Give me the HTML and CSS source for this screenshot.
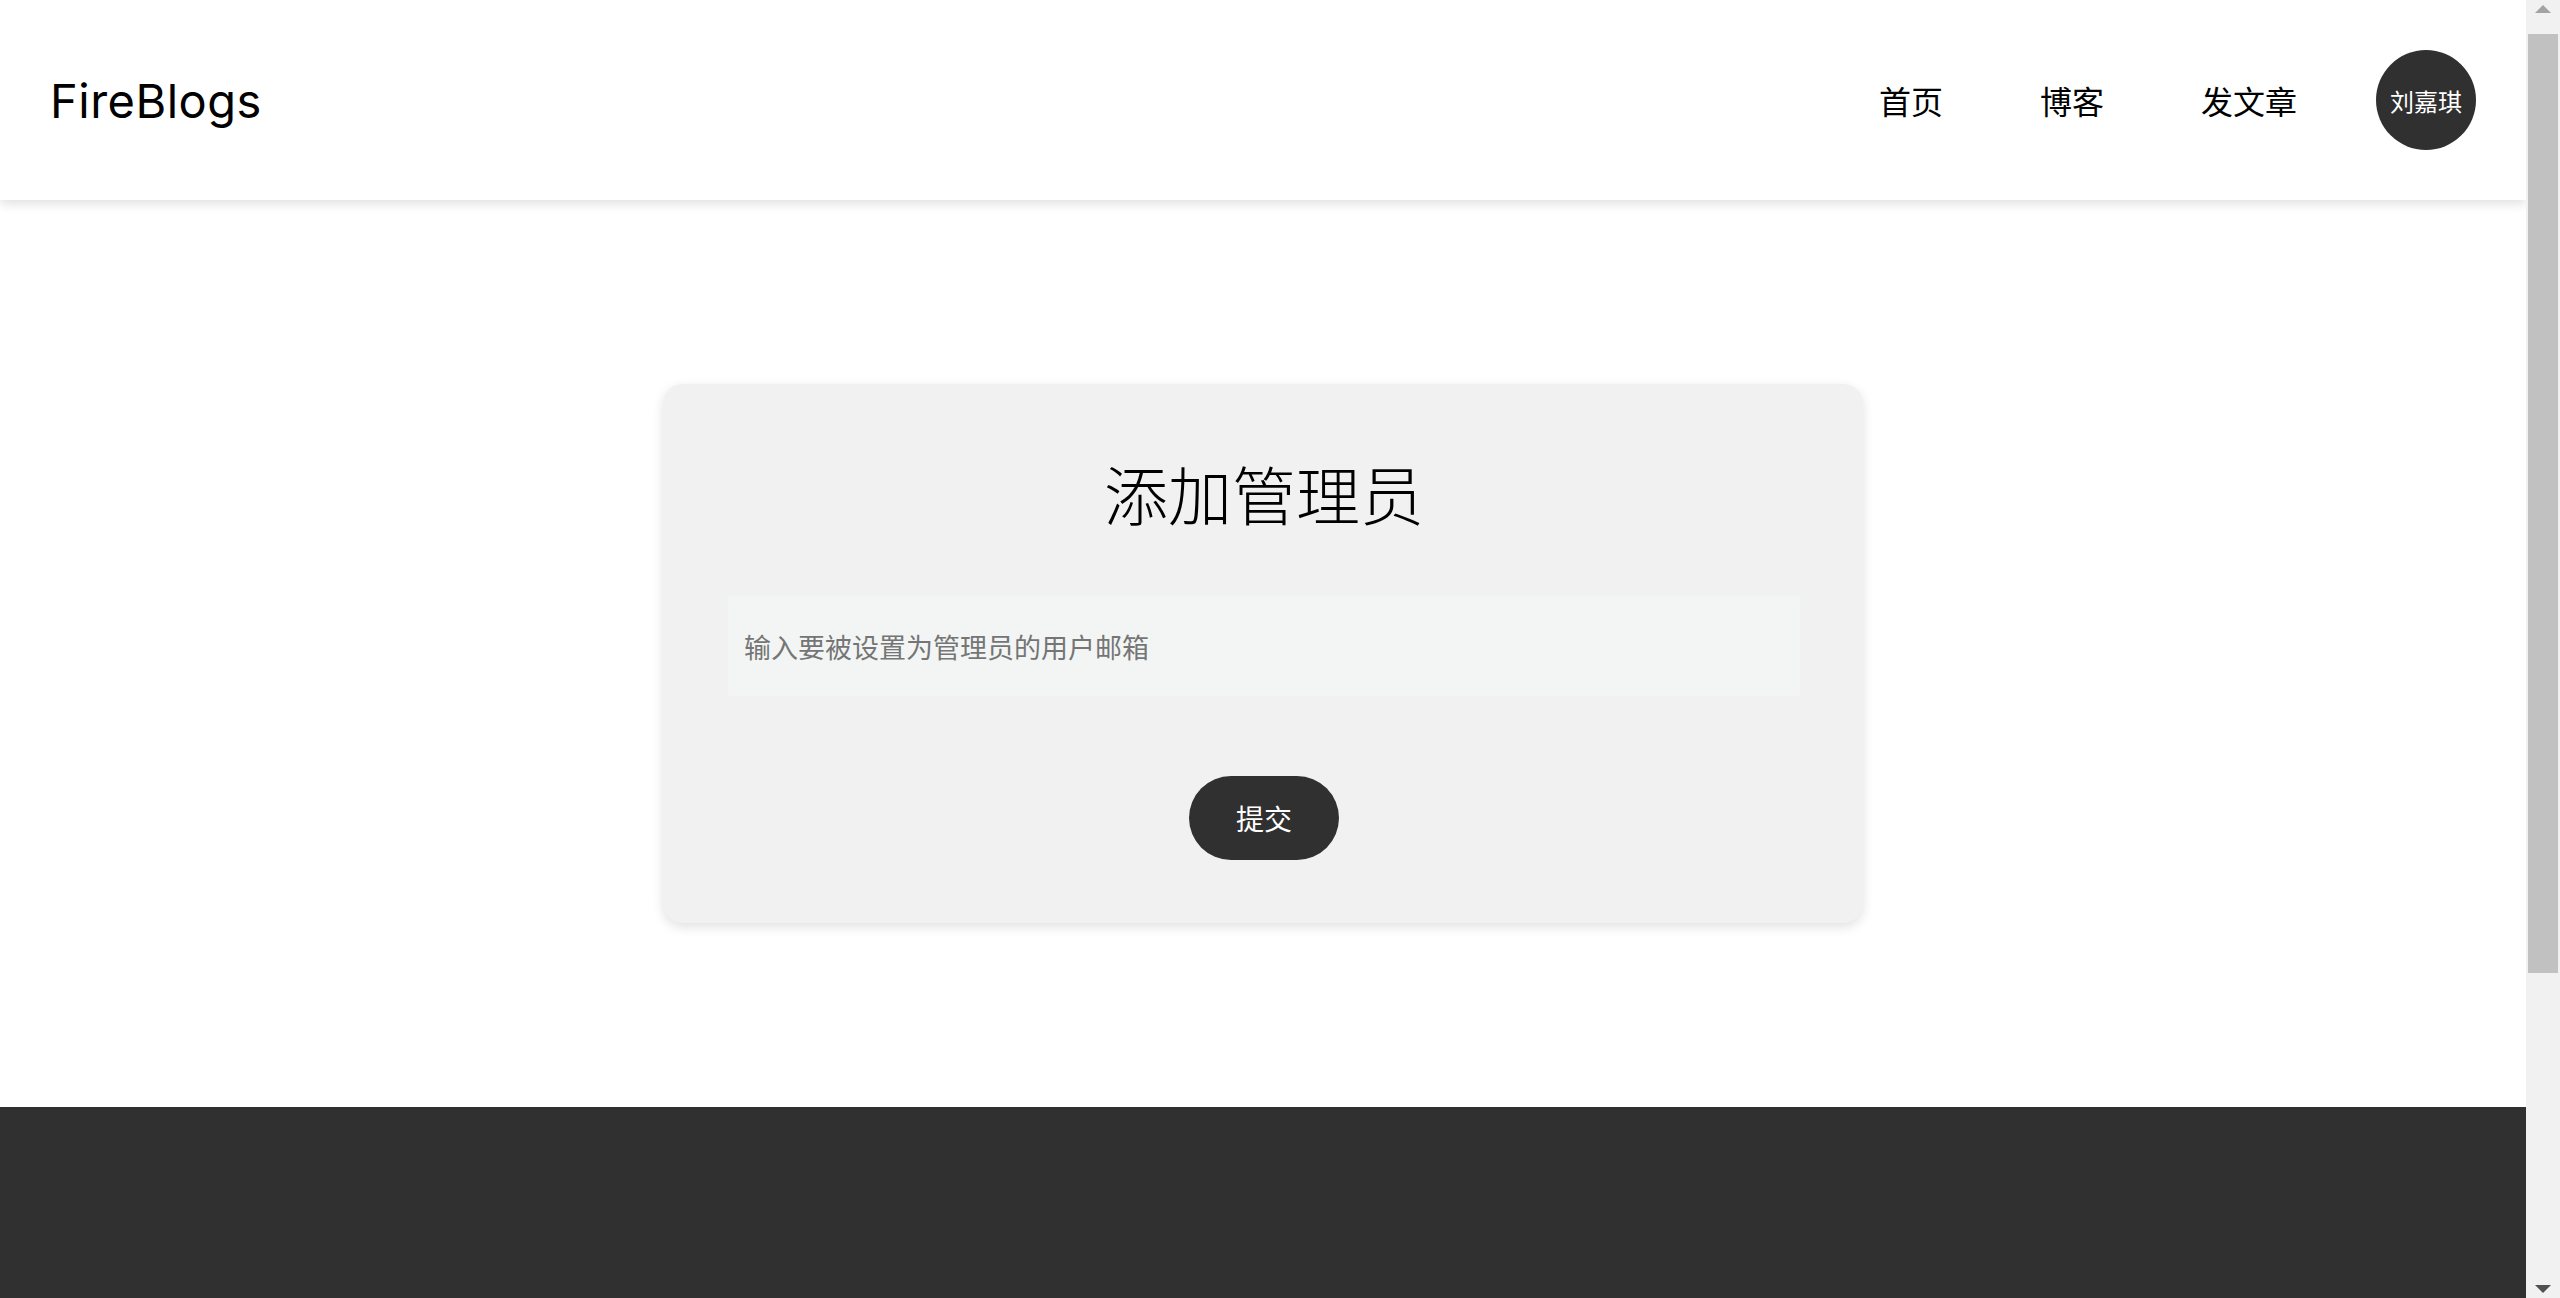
FILE: index.html
```html
<!DOCTYPE html>
<html lang="zh">
<head>
  <meta charset="UTF-8" />
  <title>FireBlogs - 添加管理员</title>
  <link rel="stylesheet" href="styles.css">
</head>
<body>
  <header class="nav-bar">
    <div class="logo">FireBlogs</div>
    <nav class="nav-links">
      <a href="#" class="nav-link">首页</a>
      <a href="#" class="nav-link">博客</a>
      <a href="#" class="nav-link">发文章</a>
      <div class="avatar">刘嘉琪</div>
    </nav>
  </header>

  <main class="admin-page">
    <div class="admin-card">
      <h2 class="admin-title">添加管理员</h2>
      <input class="admin-input" type="text" placeholder="输入要被设置为管理员的用户邮箱" />
      <button class="submit-button">提交</button>
    </div>
  </main>

  <footer class="footer"></footer>

  <!-- window scrollbar, drawn since the shot has no native one -->
  <div class="page-scrollbar">
    <div class="scroll-arrow up"></div>
    <div class="scroll-thumb"></div>
    <div class="scroll-arrow down"></div>
  </div>
</body>
</html>
```

FILE: styles.css
```css
body {
  margin: 0 34px 0 0;
  background: #fff;
  font-family: "Noto Sans CJK SC", sans-serif;
  color: #000;
}

.nav-bar {
  height: 200px;
  padding: 0 50px;
  display: flex;
  align-items: center;
  justify-content: space-between;
  background: #fff;
  box-shadow: 0 4px 10px rgba(0, 0, 0, 0.12);
  position: relative;
  z-index: 1;
}
.logo {
  font-family: Inter, "Noto Sans", sans-serif;
  font-size: 47px;
  letter-spacing: 0.5px;
  color: #000;
}
.nav-links {
  display: flex;
  align-items: center;
}
.nav-link {
  font-size: 32px;
  color: #000;
  text-decoration: none;
  margin-right: 97px;
}
.nav-link:last-of-type {
  margin-right: 79px;
}
.avatar {
  width: 100px;
  height: 100px;
  border-radius: 50%;
  background: #303030;
  color: #fff;
  font-size: 24px;
  display: flex;
  align-items: center;
  justify-content: center;
}

.admin-page {
  padding: 184px 0;
  display: flex;
  justify-content: center;
}
.admin-card {
  width: 1200px;
  box-sizing: border-box;
  padding: 64px 63px 63px 65px;
  background: #f1f1f1;
  border-radius: 20px;
  box-shadow: 0 4px 12px rgba(0, 0, 0, 0.12);
  display: flex;
  flex-direction: column;
  align-items: center;
}
.admin-title {
  margin: 0 0 60px;
  font-size: 64px;
  font-weight: 300;
  line-height: 88px;
}
.admin-input {
  width: 100%;
  height: 100px;
  box-sizing: border-box;
  padding: 0 16px;
  border: none;
  outline: none;
  background: #f2f5f4;
  font-family: "Noto Sans CJK SC", sans-serif;
  font-size: 27px;
}
.admin-input::placeholder {
  color: #757575;
}
.submit-button {
  margin-top: 80px;
  width: 150px;
  height: 84px;
  border: none;
  border-radius: 42px;
  background: #303030;
  color: #fff;
  font-family: "Noto Sans CJK SC", sans-serif;
  font-size: 28px;
  cursor: pointer;
}

.footer {
  height: 593px;
  background: #303030;
}

.page-scrollbar {
  position: fixed;
  top: 0;
  right: 0;
  width: 34px;
  height: 100vh;
  background: #f1f1f1;
  display: flex;
  flex-direction: column;
  align-items: center;
  z-index: 10;
}
.scroll-arrow {
  height: 34px;
  width: 100%;
  flex-shrink: 0;
  display: flex;
  justify-content: center;
}
.scroll-arrow::before {
  content: "";
  width: 0;
  height: 0;
  border-left: 8px solid transparent;
  border-right: 8px solid transparent;
}
.scroll-arrow.up::before {
  margin-top: 5px;
  border-bottom: 8px solid #a3a3a3;
}
.scroll-arrow.down {
  margin-top: auto;
  align-items: flex-end;
}
.scroll-arrow.down::before {
  margin-bottom: 5px;
  border-top: 8px solid #505050;
}
.scroll-thumb {
  width: 30px;
  height: 939px;
  background: #c1c1c1;
}
```
